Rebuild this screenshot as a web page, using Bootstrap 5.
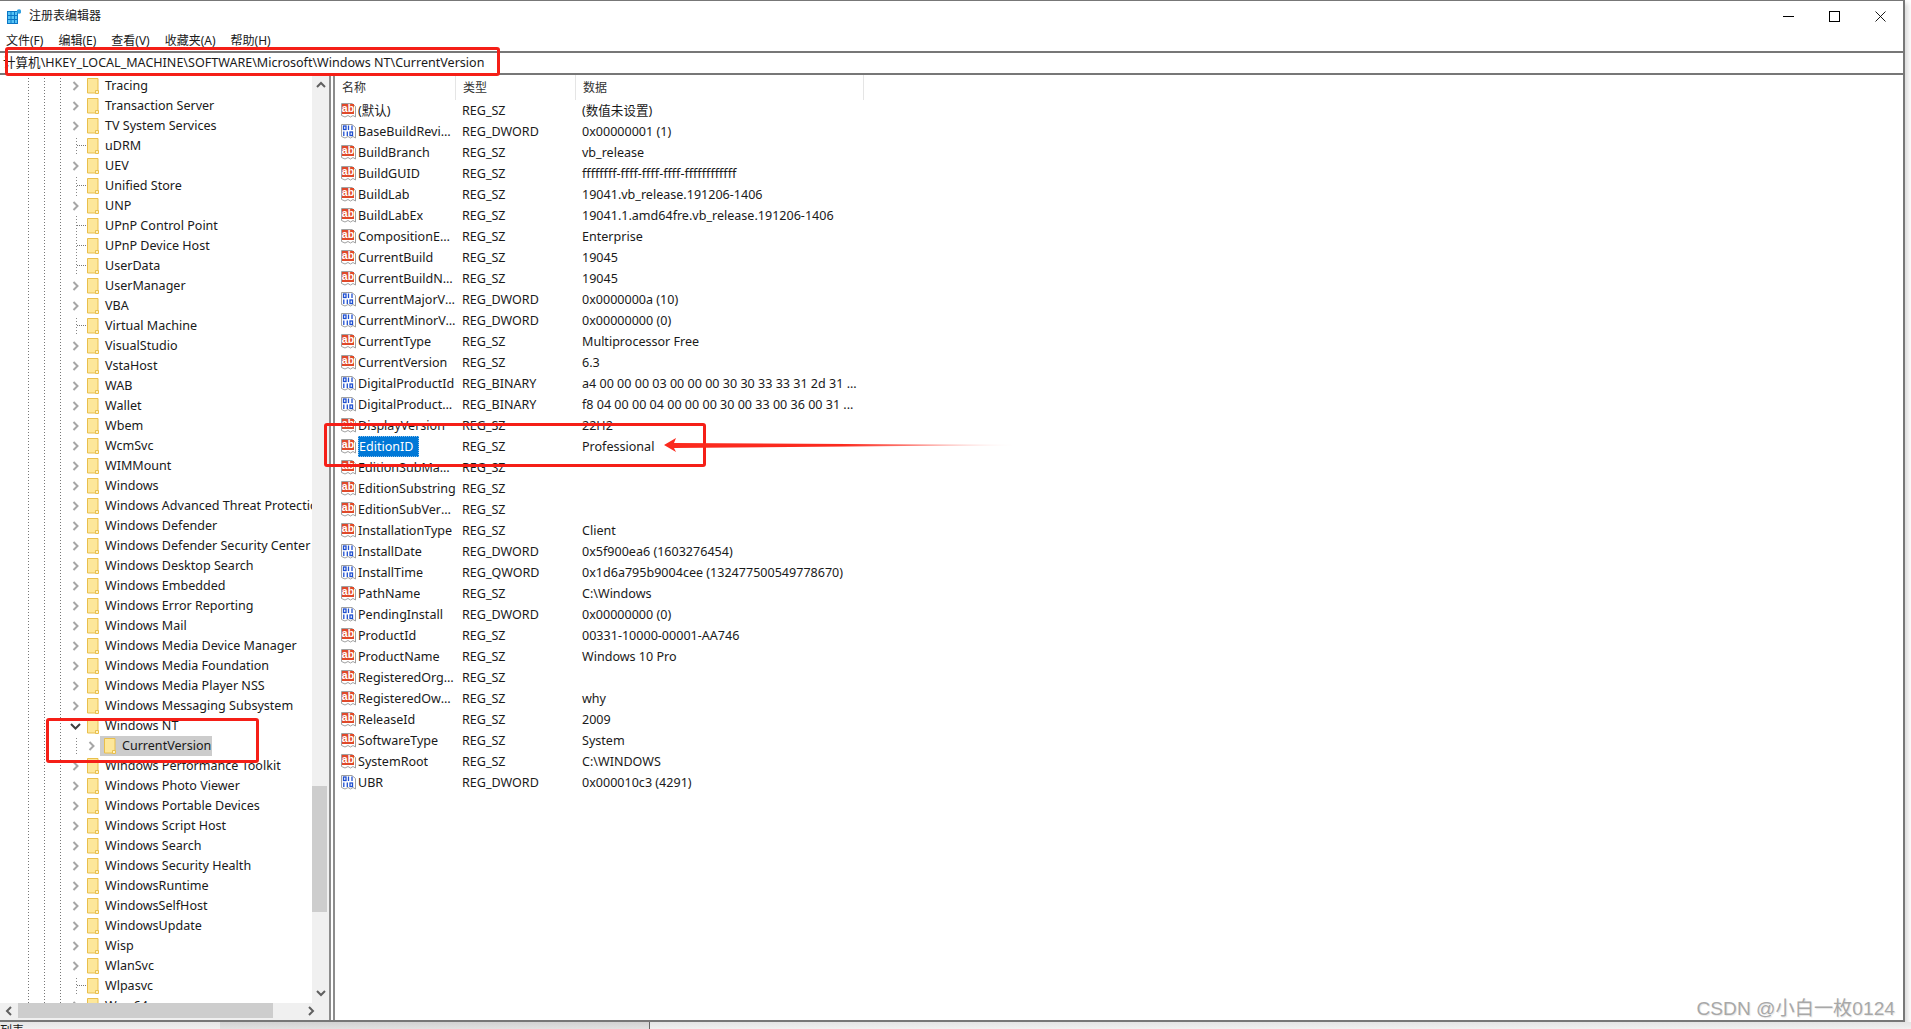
<!DOCTYPE html>
<html lang="zh-CN">
<head>
  <meta charset="UTF-8" />
  <meta name="viewport" content="width=device-width, initial-scale=1">
  <title>注册表编辑器</title>
  <link href="https://cdn.jsdelivr.net/npm/bootstrap@5.3.0/dist/css/bootstrap.min.css" rel="stylesheet">
  <style>
    html, body {
      height: 100%;
      margin: 0;
      overflow: hidden;
      background: #fff;
    }
    body {
      font-family: "Noto Sans", "Noto Sans CJK SC", sans-serif;
      font-size: 12.55px;
      line-height: 20px;
      color: #1a1a1a;
    }

    /* Window frame */
    .reg-window {
      width: 1905px;
      height: 1022px;
      border-top: 1px solid #777;
      border-right: 2px solid #777;
      border-bottom: 2px solid #777;
      box-shadow: 3px 3px 5px rgba(0, 0, 0, 0.15);
    }
    .reg-head {
      height: 50px;
      flex: none;
    }
    .reg-titlebar {
      height: 30px;
      padding-left: 7px;
      font-size: 12px;
    }
    .reg-controls {
      height: 30px;
    }
    .reg-ctl {
      width: 46px;
      height: 30px;
    }
    .reg-menu {
      height: 20px;
      padding-left: 6px;
      gap: 15px;
      font-size: 12px;
    }
    .reg-address {
      height: 24px;
      flex: none;
      padding-left: 3px;
      border-top: 2px solid #777;
      border-bottom: 2px solid #777;
      line-height: 20px;
    }

    /* Tree pane */
    .reg-tree-pane {
      width: 329px;
      flex: none;
      background: #f0f0f0;
    }
    .reg-tree-wrap {
      height: 928px;
      flex: none;
    }
    .reg-tree {
      width: 312px;
      padding-top: 1px;
      background-color: #fff;
      background-image:
        linear-gradient(#777 50%, transparent 50%),
        linear-gradient(#777 50%, transparent 50%),
        linear-gradient(#777 50%, transparent 50%),
        linear-gradient(#888 50%, transparent 50%);
      background-size: 1px 3px;
      background-repeat: repeat-y;
      background-position: 28px 0, 44px 0, 60px 0, 76px 0;
    }
    .tree-row {
      height: 20px;
      padding-left: 68px;
    }
    .tree-row.is-child {
      padding-left: 84px;
    }
    .tree-toggle {
      width: 16px;
      height: 20px;
      flex: none;
      background: #fff;
    }
    .tree-stub {
      width: 18px;
      height: 20px;
      flex: none;
    }
    .tree-stub::after {
      content: "";
      display: block;
      width: 9px;
      margin: 9px 0 0 9px;
      border-top: 1px dotted #777;
    }
    .tree-folder {
      width: 14px;
      height: 18px;
      flex: none;
      margin-left: 2px;
      margin-right: 5px;
    }
    .tree-row.has-stub .tree-folder {
      margin-left: 0;
    }
    .tree-text {
      white-space: nowrap;
      margin-top: -1px;
    }
    .tree-row.is-selected {
      background: linear-gradient(90deg, transparent 98px, #ccc 98px, #ccc 212px, transparent 212px);
    }
    .tree-row.is-selected .tree-folder {
      margin-left: 3px;
    }

    /* Scrollbars */
    .reg-vbar {
      width: 17px;
      flex: none;
      background: #f0f0f0;
    }
    .bar-arrow {
      height: 20px;
      flex: none;
    }
    .vbar-space-top {
      height: 691px;
      flex: none;
    }
    .vbar-thumb {
      width: 15px;
      height: 126px;
      flex: none;
      background: #cdcdcd;
    }
    .reg-hbar {
      height: 15px;
      flex: none;
    }
    .hbar-arrow {
      width: 18px;
      flex: none;
    }
    .hbar-thumb {
      width: 255px;
      flex: none;
      background: #cdcdcd;
    }
    .hbar-space {
      width: 29px;
      flex: none;
    }

    .reg-split {
      width: 6px;
      flex: none;
      border-left: 2px solid #8c8c8c;
      border-right: 2px solid #8c8c8c;
      background: #fff;
    }

    /* Value list */
    .list-head {
      height: 25px;
      flex: none;
      font-size: 12px;
      color: #333;
    }
    .list-head > div {
      height: 25px;
      padding-left: 7px;
      line-height: 26px;
      border-right: 1px solid #e5e5e5;
    }
    .col-name { width: 121px; flex: none; }
    .col-type { width: 120px; flex: none; }
    .col-data { width: 288px; flex: none; }
    .val-row {
      height: 21px;
      line-height: 21px;
    }
    .val-row .col-name {
      width: 121px;
      padding-left: 5px;
    }
    .val-row .col-type {
      padding-left: 6px;
    }
    .val-row .col-data {
      padding-left: 6px;
    }
    .val-icon {
      width: 17px;
      height: 17px;
      flex: none;
      margin-right: 1px;
    }
    .val-label {
      min-width: 0;
      overflow: hidden;
      text-overflow: ellipsis;
      white-space: nowrap;
    }
    .val-row.is-selected .val-label {
      width: 61px;
      flex: none;
      background: #0078d7;
      color: #fff;
      padding-left: 1px;
      margin-right: -4px;
      outline: 1px dotted #8fc4ee;
      outline-offset: -1px;
    }

    /* Strip of the window behind */
    .reg-behind {
      height: 8px;
      font-size: 12px;
      line-height: 18px;
      background: #ececec;
    }
    .behind-a { width: 220px; flex: none; background: linear-gradient(#e6e6e6, #f2f2f2); }
    .behind-b { width: 430px; flex: none; background: linear-gradient(#d2d2d2, #e4e4e4); border-right: 1px solid #666; }
    .behind-c { flex-grow: 1; background: linear-gradient(#e4e4e4, #f2f2f2); }

    /* Red marks laid over the screenshot */
    .mark-box {
      border: 3px solid #f51f17;
      border-radius: 3px;
      pointer-events: none;
    }
    .mark-address { left: 5px; top: 47px; width: 495px; height: 29px; }
    .mark-edition { left: 324px; top: 423px; width: 382px; height: 44px; }
    .mark-nt { left: 46px; top: 718px; width: 213px; height: 45px; }
    .mark-arrow { left: 664px; top: 436px; }
    .csdn-mark {
      right: 16px;
      top: 995px;
      font-family: "Liberation Sans", "Noto Sans CJK SC", sans-serif;
      font-size: 19.2px;
      line-height: 28px;
      color: #a8a8a8;
      text-shadow: 1px 1px 1px #e6e6e6;
    }
  </style>
</head>
<body>
  <svg width="0" height="0" class="position-absolute">
    <symbol id="i-folder" viewBox="0 0 14 18">
      <path d="M1.500 1.500h10.500v14.500h-10.500z" fill="#fde79a" stroke="#e9bf4c"/>
      <path d="M9.500 16.500v-3h3v3z" fill="#fff3c4" stroke="#e9bf4c"/>
    </symbol>
    <symbol id="i-right" viewBox="0 0 16 20">
      <path d="M5.500 6l4 4-4 4" fill="none" stroke="#a6a6a6" stroke-width="2"/>
    </symbol>
    <symbol id="i-down" viewBox="0 0 16 20">
      <path d="M3 8l4.500 4.500 4.500-4.500" fill="none" stroke="#404040" stroke-width="2"/>
    </symbol>
    <symbol id="i-sz" viewBox="0 0 17 17">
      <path d="M1.500 1.500h10.500l3.500 3v10.500l-2.500-1.500-2.500 1.500-2.500-1.500-3 1.500-3.500-1.500z" fill="#fff" stroke="#a0a0a0"/>
      <rect x="2" y="2" width="12" height="10" fill="#e0492a"/>
      <text x="8" y="10.300" text-anchor="middle" font-family="Liberation Sans, sans-serif" font-weight="700" font-size="10.500" fill="#fff">ab</text>
    </symbol>
    <symbol id="i-bin" viewBox="0 0 17 17">
      <path d="M1.500 1.500h10.500l3.500 3v10.500l-2.500-1.500-2.500 1.500-2.500-1.500-3 1.500-3.500-1.500z" fill="#fff" stroke="#a0a0a0"/>
      <g fill="none" stroke="#1f4fd0" stroke-width="1.300">
        <rect x="3.500" y="3" width="2.500" height="3.500"/>
        <path d="M8.500 2.500v4.500M12 2.500v4.500M3.800 8.500v4.500M7.300 8.500v4.500"/>
        <rect x="10" y="9" width="2.500" height="3.500"/>
      </g>
    </symbol>
  </svg>

  <div class="reg-window d-flex flex-column bg-white">
    <div class="reg-head">
      <div class="d-flex align-items-center justify-content-between">
        <div class="reg-titlebar d-flex align-items-center gap-2">
          <svg width="14" height="15" viewBox="0 0 14 15">
            <rect x="0" y="2" width="11" height="13" fill="#0b76c5"/>
            <g fill="#56c3f5">
              <rect x="1" y="3" width="2.500" height="3"/><rect x="4.500" y="3" width="2.500" height="3"/><rect x="8" y="3" width="2" height="3"/>
              <rect x="1" y="7" width="2.500" height="3"/><rect x="4.500" y="7" width="2.500" height="3"/><rect x="8" y="7" width="2" height="3"/>
              <rect x="1" y="11" width="2.500" height="3"/><rect x="4.500" y="11" width="2.500" height="3"/><rect x="8" y="11" width="2" height="3"/>
            </g>
            <circle cx="12" cy="2.500" r="2.200" fill="#2f9fe0"/>
          </svg>
          <span>注册表编辑器</span>
        </div>
        <div class="reg-controls d-flex">
          <div class="reg-ctl d-flex align-items-center justify-content-center">
            <svg width="11" height="11" viewBox="0 0 11 11"><path d="M0 5.500h11" stroke="#000"/></svg>
          </div>
          <div class="reg-ctl d-flex align-items-center justify-content-center">
            <svg width="11" height="11" viewBox="0 0 11 11"><rect x=".5" y=".5" width="10" height="10" fill="none" stroke="#000"/></svg>
          </div>
          <div class="reg-ctl d-flex align-items-center justify-content-center">
            <svg width="11" height="11" viewBox="0 0 11 11"><path d="M.5.500l10 10M10.500.500l-10 10" stroke="#000" stroke-width=".9"/></svg>
          </div>
        </div>
      </div>
      <div class="reg-menu d-flex align-items-center">
        <span>文件(F)</span>
        <span>编辑(E)</span>
        <span>查看(V)</span>
        <span>收藏夹(A)</span>
        <span>帮助(H)</span>
      </div>
    </div>

    <div class="reg-address text-nowrap">计算机\HKEY_LOCAL_MACHINE\SOFTWARE\Microsoft\Windows NT\CurrentVersion</div>

    <div class="d-flex flex-grow-1 overflow-hidden">
      <div class="reg-tree-pane d-flex flex-column">
        <div class="reg-tree-wrap d-flex">
          <div class="reg-tree overflow-hidden" id="tree"></div>
          <div class="reg-vbar d-flex flex-column">
            <div class="bar-arrow d-flex align-items-center justify-content-center">
              <svg width="10" height="8" viewBox="0 0 10 8"><path d="M1 6l4-4 4 4" fill="none" stroke="#606060" stroke-width="2"/></svg>
            </div>
            <div class="vbar-space-top"></div>
            <div class="vbar-thumb"></div>
            <div class="flex-grow-1"></div>
            <div class="bar-arrow d-flex align-items-center justify-content-center">
              <svg width="10" height="8" viewBox="0 0 10 8"><path d="M1 2l4 4 4-4" fill="none" stroke="#606060" stroke-width="2"/></svg>
            </div>
          </div>
        </div>
        <div class="reg-hbar d-flex">
          <div class="hbar-arrow d-flex align-items-center justify-content-center">
            <svg width="8" height="10" viewBox="0 0 8 10"><path d="M6 1L2 5l4 4" fill="none" stroke="#606060" stroke-width="2"/></svg>
          </div>
          <div class="hbar-thumb"></div>
          <div class="hbar-space"></div>
          <div class="hbar-arrow d-flex align-items-center justify-content-center">
            <svg width="8" height="10" viewBox="0 0 8 10"><path d="M2 1l4 4-4 4" fill="none" stroke="#606060" stroke-width="2"/></svg>
          </div>
        </div>
      </div>

      <div class="reg-split"></div>

      <div class="flex-grow-1 overflow-hidden">
        <div class="list-head d-flex">
          <div class="col-name">名称</div>
          <div class="col-type">类型</div>
          <div class="col-data">数据</div>
        </div>
        <div id="values"></div>
      </div>
    </div>
  </div>

  <div class="reg-behind d-flex overflow-hidden">
    <div class="behind-a text-nowrap">列表</div>
    <div class="behind-b"></div>
    <div class="behind-c"></div>
  </div>

  <div class="mark-box position-absolute mark-address"></div>
  <div class="mark-box position-absolute mark-edition"></div>
  <div class="mark-box position-absolute mark-nt"></div>
  <svg class="position-absolute mark-arrow" width="356" height="18" viewBox="0 0 356 18">
    <defs>
      <linearGradient id="arrow-fade">
        <stop offset="0" stop-color="#fb2a1e"/>
        <stop offset="0.5" stop-color="#fb2a1e"/>
        <stop offset="1" stop-color="#fb2a1e" stop-opacity="0"/>
      </linearGradient>
    </defs>
    <path d="M0 9l12-7-2 5 346 2-346 3 2 4z" fill="url(#arrow-fade)"/>
  </svg>
  <div class="csdn-mark position-absolute">CSDN @小白一枚0124</div>

  <script>
    // [label, kind] kind: c = chevron, s = stub, d = open, x = selected child
    const treeItems = [
      ['Tracing','c'],['Transaction Server','c'],['TV System Services','c'],['uDRM','s'],['UEV','c'],
      ['Unified Store','s'],['UNP','c'],['UPnP Control Point','s'],['UPnP Device Host','s'],['UserData','s'],
      ['UserManager','c'],['VBA','c'],['Virtual Machine','s'],['VisualStudio','c'],['VstaHost','c'],
      ['WAB','c'],['Wallet','c'],['Wbem','c'],['WcmSvc','c'],['WIMMount','c'],['Windows','c'],
      ['Windows Advanced Threat Protection','c'],['Windows Defender','c'],['Windows Defender Security Center','c'],
      ['Windows Desktop Search','c'],['Windows Embedded','c'],['Windows Error Reporting','c'],['Windows Mail','c'],
      ['Windows Media Device Manager','c'],['Windows Media Foundation','c'],['Windows Media Player NSS','c'],
      ['Windows Messaging Subsystem','c'],['Windows NT','d'],['CurrentVersion','x'],
      ['Windows Performance Toolkit','c'],['Windows Photo Viewer','c'],['Windows Portable Devices','c'],
      ['Windows Script Host','c'],['Windows Search','c'],['Windows Security Health','c'],['WindowsRuntime','c'],
      ['WindowsSelfHost','c'],['WindowsUpdate','c'],['Wisp','c'],['WlanSvc','c'],['Wlpasvc','s'],['Wow64','c']
    ];

    const values = [
      ['(默认)','REG_SZ','(数值未设置)'],
      ['BaseBuildRevisionNumber','REG_DWORD','0x00000001 (1)'],
      ['BuildBranch','REG_SZ','vb_release'],
      ['BuildGUID','REG_SZ','ffffffff-ffff-ffff-ffff-ffffffffffff'],
      ['BuildLab','REG_SZ','19041.vb_release.191206-1406'],
      ['BuildLabEx','REG_SZ','19041.1.amd64fre.vb_release.191206-1406'],
      ['CompositionEditionID','REG_SZ','Enterprise'],
      ['CurrentBuild','REG_SZ','19045'],
      ['CurrentBuildNumber','REG_SZ','19045'],
      ['CurrentMajorVersionNumber','REG_DWORD','0x0000000a (10)'],
      ['CurrentMinorVersionNumber','REG_DWORD','0x00000000 (0)'],
      ['CurrentType','REG_SZ','Multiprocessor Free'],
      ['CurrentVersion','REG_SZ','6.3'],
      ['DigitalProductId','REG_BINARY','a4 00 00 00 03 00 00 00 30 30 33 33 31 2d 31 ...'],
      ['DigitalProductId4','REG_BINARY','f8 04 00 00 04 00 00 00 30 00 33 00 36 00 31 ...'],
      ['DisplayVersion','REG_SZ','22H2'],
      ['EditionID','REG_SZ','Professional'],
      ['EditionSubManufacturer','REG_SZ',''],
      ['EditionSubstring','REG_SZ',''],
      ['EditionSubVersion','REG_SZ',''],
      ['InstallationType','REG_SZ','Client'],
      ['InstallDate','REG_DWORD','0x5f900ea6 (1603276454)'],
      ['InstallTime','REG_QWORD','0x1d6a795b9004cee (132477500549778670)'],
      ['PathName','REG_SZ','C:\\Windows'],
      ['PendingInstall','REG_DWORD','0x00000000 (0)'],
      ['ProductId','REG_SZ','00331-10000-00001-AA746'],
      ['ProductName','REG_SZ','Windows 10 Pro'],
      ['RegisteredOrganization','REG_SZ',''],
      ['RegisteredOwner','REG_SZ','why'],
      ['ReleaseId','REG_SZ','2009'],
      ['SoftwareType','REG_SZ','System'],
      ['SystemRoot','REG_SZ','C:\\WINDOWS'],
      ['UBR','REG_DWORD','0x000010c3 (4291)']
    ];

    function use(id, cls, w, h) {
      return `<svg class="${cls}" width="${w}" height="${h}"><use href="#${id}"/></svg>`;
    }

    document.getElementById('tree').innerHTML = treeItems.map(([label, kind]) => {
      let cls = 'tree-row d-flex align-items-center';
      let toggle = use('i-right', 'tree-toggle', 16, 20);
      if (kind === 'd') toggle = use('i-down', 'tree-toggle', 16, 20);
      if (kind === 's') {
        toggle = '<div class="tree-stub"></div>';
        cls += ' has-stub';
      }
      if (kind === 'x') cls += ' is-child is-selected';
      return `<div class="${cls}">${toggle}${use('i-folder', 'tree-folder', 14, 18)}<span class="tree-text">${label}</span></div>`;
    }).join('');

    document.getElementById('values').innerHTML = values.map(([name, type, data]) => {
      const icon = type === 'REG_SZ' ? 'i-sz' : 'i-bin';
      const sel = name === 'EditionID' ? ' is-selected' : '';
      return `<div class="val-row d-flex${sel}">
        <div class="col-name d-flex align-items-center">${use(icon, 'val-icon', 17, 17)}<span class="val-label">${name}</span></div>
        <div class="col-type">${type}</div>
        <div class="col-data text-nowrap">${data}</div>
      </div>`;
    }).join('');
  </script>
  <script src="https://cdn.jsdelivr.net/npm/bootstrap@5.3.0/dist/js/bootstrap.bundle.min.js"></script>
</body>
</html>
